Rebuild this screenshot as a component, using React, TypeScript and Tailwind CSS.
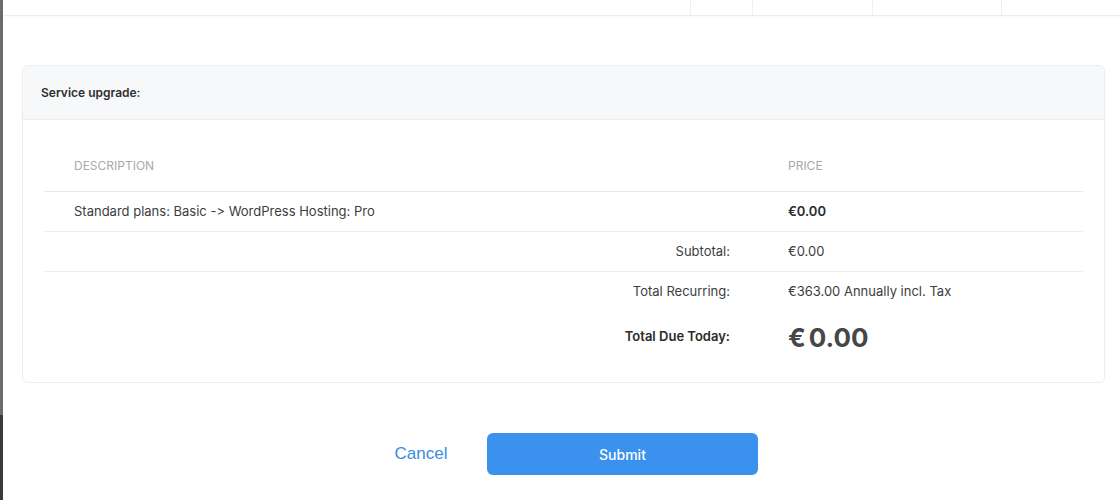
import React from 'react';

const font = { fontFamily: 'Inter, "Noto Sans", sans-serif', fontFeatureSettings: '"calt" 0, "liga" 0' };

const App: React.FC = () => {
  return (
    <div className="flex h-[500px] w-[1120px] bg-white overflow-hidden" style={font}>
      {/* dark edge of the window behind */}
      <div className="flex w-[3px] flex-col">
        <div className="h-[415px] bg-[#6b6b6b]" />
        <div className="flex-1 bg-[#3a3a3a]" />
      </div>

      <div className="flex flex-1 flex-col">
        {/* strip of the page above */}
        <div className="flex h-[16px] border-b border-[#ececec] shadow-[0_1px_2px_rgba(0,0,0,0.03)]">
          <div className="w-[687px]" />
          <div className="w-[62px] border-l border-[#efefef]" />
          <div className="w-[120px] border-l border-[#efefef]" />
          <div className="w-[129px] border-l border-[#efefef]" />
          <div className="flex-1 border-l border-[#efefef]" />
        </div>

        <div className="ml-[19px] mr-[15px] mt-[49px] rounded-md border border-[#ebedf0] bg-white">
          <div className="flex h-[54px] items-center rounded-t-md border-b border-[#ebedf0] bg-[#f7f8fa] px-[18px]">
            <h3 className="text-[12px] font-semibold text-[#2f2f2f]">Service upgrade:</h3>
          </div>

          <div className="px-[21px] pt-[21px] pb-[20px] text-[13px] text-[#3d3d3d]">
            <div className="grid h-[51px] grid-cols-[714px_1fr] items-center border-b border-[#e8e8e8] text-[12px] uppercase text-[#a9a9a9]">
              <div className="pl-[30px]">Description</div>
              <div className="pl-[30px]">Price</div>
            </div>

            <div className="grid h-[40px] grid-cols-[714px_1fr] items-center border-b border-[#eeeeee]">
              <div className="pl-[30px]">Standard plans: Basic -&gt; WordPress Hosting: Pro</div>
              <div className="pl-[30px] font-semibold text-[#2b2b2b]">€0.00</div>
            </div>

            <div className="grid h-[40px] grid-cols-[714px_1fr] items-center border-b border-[#eeeeee]">
              <div className="pr-[28px] text-right">Subtotal:</div>
              <div className="pl-[30px]">€0.00</div>
            </div>

            <div className="grid h-[40px] grid-cols-[714px_1fr] items-center">
              <div className="pr-[28px] text-right">Total Recurring:</div>
              <div className="pl-[30px]">€363.00 Annually incl. Tax</div>
            </div>

            <div className="grid h-[50px] grid-cols-[714px_1fr] items-center">
              <div className="pr-[28px] text-right font-semibold text-[#2b2b2b]">Total Due Today:</div>
              <div className="flex items-baseline pl-[30px] text-[26px] font-bold text-[#474747]">
                <span>€</span>
                <span className="ml-[3px]">0.00</span>
              </div>
            </div>
          </div>
        </div>

        <div className="mt-[50px] flex items-center pl-[390px]" style={{ fontFamily: '"Liberation Sans", Arial, sans-serif' }}>
          <button className="w-[56px] text-center text-[17px] text-[#3b8be0]">Cancel</button>
          <button className="ml-[38px] h-[42px] w-[271px] rounded-md bg-[#3b91ee] text-[14px] font-medium text-white" style={{ fontFamily: 'Inter, sans-serif' }}>
            Submit
          </button>
        </div>
      </div>
    </div>
  );
};

export default App;
